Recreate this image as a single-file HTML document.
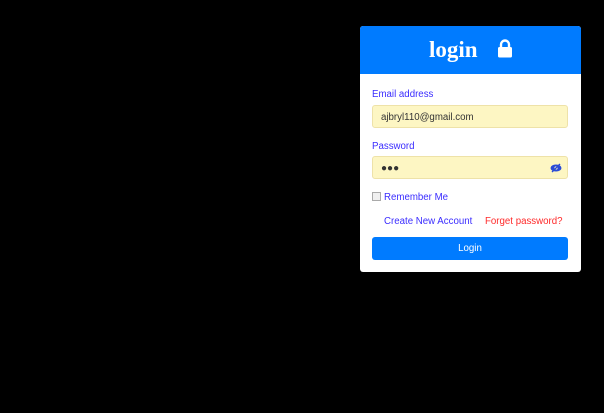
<!DOCTYPE html>
<html><head><meta charset="utf-8"><style>
*{box-sizing:border-box;margin:0;padding:0}
body{width:604px;height:413px;background:#000;position:relative;font-family:"Liberation Sans",sans-serif;overflow:hidden}
.card{position:absolute;left:360px;top:26px;width:221px;height:246px;background:#fff;border-radius:3px;overflow:hidden}
.hd{height:48px;background:#007bff;position:relative}
.hd span{position:absolute;left:69px;top:11px;color:#fff;font-family:"Liberation Serif",serif;font-weight:bold;font-size:23px}
.lbl{position:absolute;left:12px;color:#3a2cff;font-size:9.7px}
.inp{position:absolute;left:12px;width:196px;height:23px;background:#fdf6c3;border:1px solid #eee2a8;border-radius:3px;font-size:9.7px;color:#333;padding:6px 0 0 8px}
.a{position:absolute;font-size:9.7px}
.btn{position:absolute;left:12px;top:211px;width:196px;height:23px;background:#007bff;border-radius:3px;color:#fff;font-size:9.7px;text-align:center;line-height:24px}
</style></head><body>
<div class="card">
 <div class="hd"><span>login</span>
  <svg style="position:absolute;left:137px;top:13px" width="16" height="19" viewBox="0 0 16 19"><path d="M4 8V5.5a4 4 0 0 1 8 0V8" fill="none" stroke="#fff" stroke-width="2.4"/><rect x="1" y="8" width="14" height="10.5" rx="1.5" fill="#fff"/></svg>
 </div>
 <div class="lbl" style="top:63px">Email address</div>
 <div class="inp" style="top:79px">ajbryl110@gmail.com</div>
 <div class="lbl" style="top:115px">Password</div>
 <div class="inp" style="top:130px;padding-top:6px;font-size:10px;letter-spacing:0">●●●
  <svg style="position:absolute;right:5px;top:6px" width="12" height="10" viewBox="0 0 12 10"><ellipse cx="6" cy="5" rx="5.5" ry="3.5" fill="#2a4bd6"/><circle cx="6" cy="5" r="1.6" fill="#fdf6c3"/><line x1="2" y1="9" x2="10" y2="1" stroke="#2a4bd6" stroke-width="1.3"/></svg>
 </div>
 <div style="position:absolute;left:12px;top:166px;width:9px;height:9px;border:1px solid #aaa;background:#f0f0f0"></div>
 <div class="a" style="left:24px;top:166px;color:#3a2cff">Remember Me</div>
 <div class="a" style="left:24px;top:190px;color:#3a2cff">Create New Account</div>
 <div class="a" style="left:125px;top:190px;color:#ff2a2a">Forget password?</div>
 <div class="btn">Login</div>
</div>
</body></html>
